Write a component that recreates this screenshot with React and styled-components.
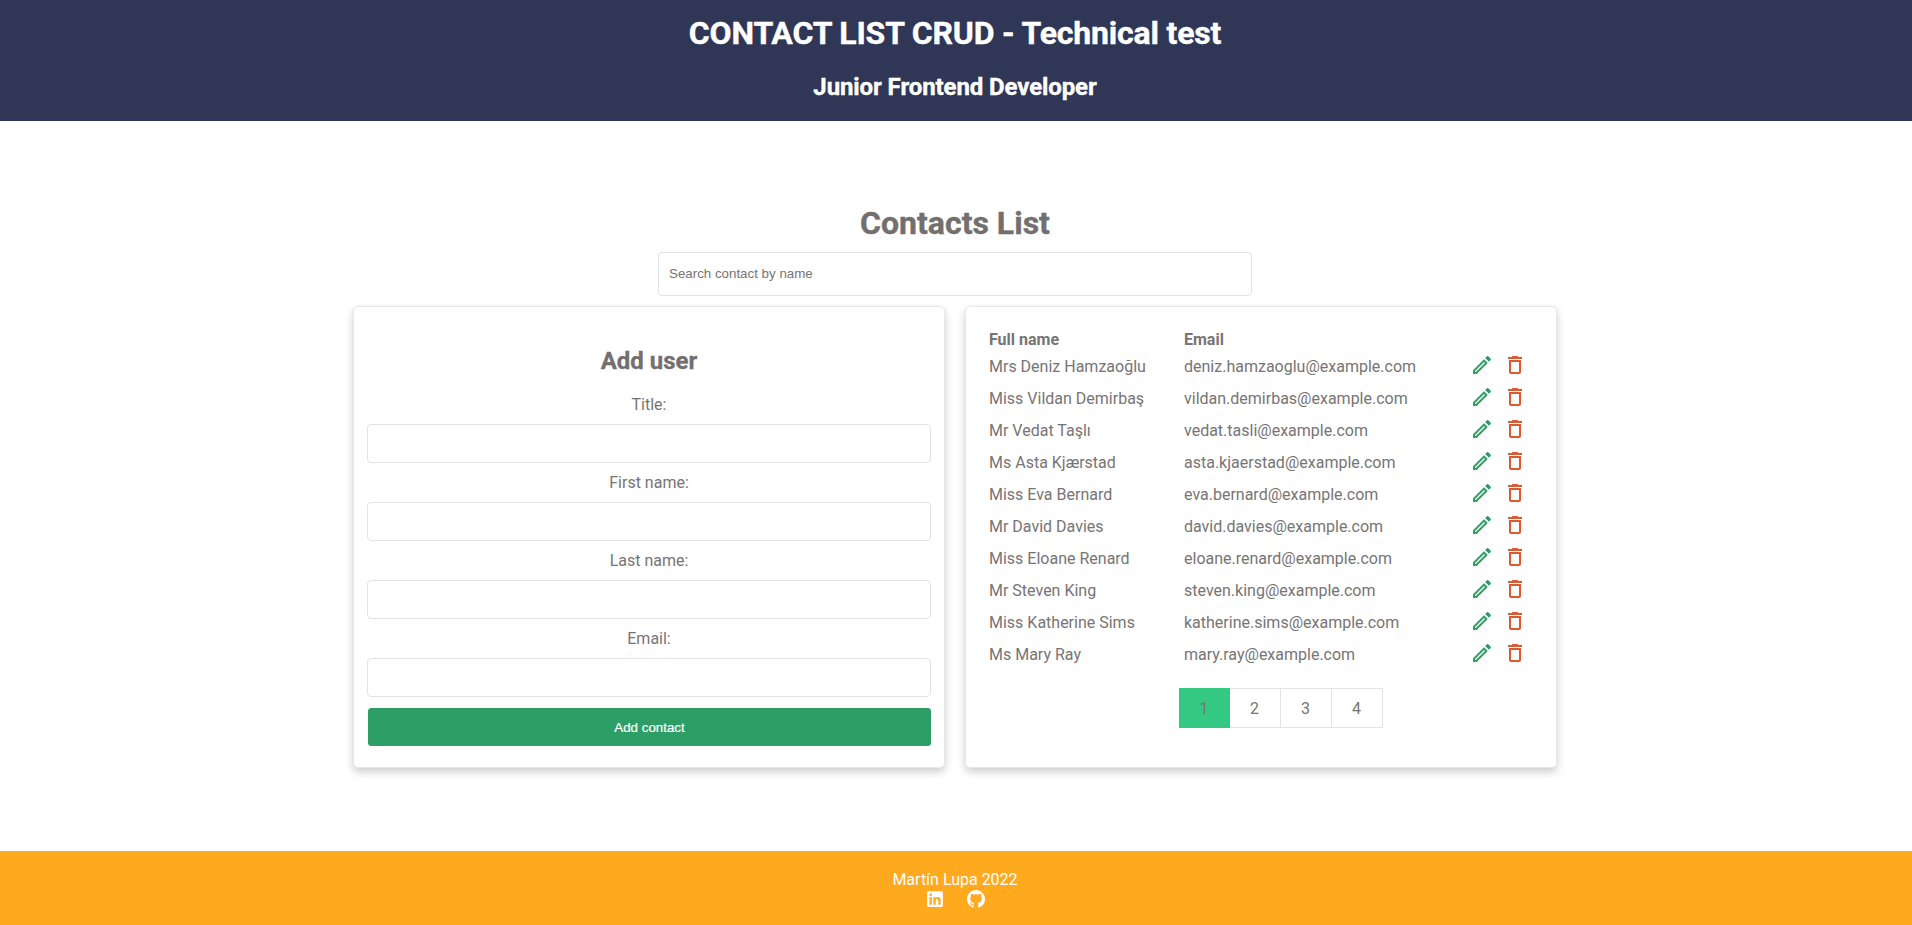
import React from 'react';
import styled, { createGlobalStyle } from 'styled-components';
import { MdOutlineEdit, MdOutlineDelete } from 'react-icons/md';
import { FaLinkedin } from 'react-icons/fa';
import { BsGithub } from 'react-icons/bs';

const GlobalStyle = createGlobalStyle`
  * {
    box-sizing: border-box;
  }
  body {
    margin: 0;
    background: #fff;
    font-family: Roboto, "Liberation Sans", sans-serif;
    color: #777474;
  }
`;

const Page = styled.div`
  min-height: 925px;
  display: flex;
  flex-direction: column;
`;

const Header = styled.header`
  height: 121px;
  background: #303655;
  color: #fff;
  text-align: center;
  padding-right: 2px;
`;

const HeaderTitle = styled.h1`
  margin: 0;
  padding-top: 14px;
  font-size: 32px;
  line-height: 38px;
  letter-spacing: -0.18px;
  -webkit-text-stroke: 0.4px #fff;
`;

const HeaderSubtitle = styled.h2`
  margin: 0;
  padding-top: 21px;
  font-size: 24px;
  line-height: 28px;
  letter-spacing: -0.1px;
  -webkit-text-stroke: 0.4px #fff;
`;

const Main = styled.main`
  flex: 1;
  display: flex;
  flex-direction: column;
  align-items: center;
  padding: 81px 2px 0 0;
`;

const PageTitle = styled.h2`
  margin: 0;
  font-size: 32px;
  line-height: 42px;
  color: #736f6f;
  -webkit-text-stroke: 0.4px #736f6f;
`;

const SearchInput = styled.input`
  width: 594px;
  height: 44px;
  margin-top: 8px;
  padding: 0 10px 2px;
  border: 1px solid #e3e3e3;
  border-radius: 4px;
  font-family: "Liberation Sans", sans-serif;
  font-size: 13.33px;
  color: #777474;
  &::placeholder {
    color: #777474;
    opacity: 1;
  }
`;

const Columns = styled.div`
  display: grid;
  grid-template-columns: 592px 592px;
  gap: 20px;
  margin-top: 10px;
`;

const Card = styled.section`
  height: 462px;
  background: #fff;
  border: 1px solid #e8e8e8;
  border-radius: 5px;
  box-shadow: 0 4px 8px rgba(0, 0, 0, 0.2);
`;

const FormCard = styled(Card)`
  padding: 0 13px;
  text-align: center;
`;

const FormTitle = styled.h3`
  margin: 0;
  padding-top: 40px;
  font-size: 24px;
  line-height: 28px;
  color: #736f6f;
  -webkit-text-stroke: 0.3px #736f6f;
`;

const Field = styled.div`
  padding-top: ${(props) => (props.$first ? '20px' : '10px')};
`;

const FieldLabel = styled.label`
  display: block;
  margin-bottom: 10px;
  font-size: 16px;
  line-height: 19px;
`;

const FieldInput = styled.input`
  display: block;
  width: 100%;
  height: 39px;
  border: 1px solid #e3e3e3;
  border-radius: 4px;
`;

const AddButton = styled.button`
  display: block;
  width: calc(100% - 1px);
  height: 38px;
  margin: 11px 0 0 1px;
  border: 1px solid #2d9f66;
  border-radius: 3px;
  background: #2d9f66;
  color: #fff;
  font-family: "Liberation Sans", sans-serif;
  font-size: 13.33px;
  -webkit-text-stroke: 0.2px #fff;
`;

const ListCard = styled(Card)`
  padding: 22px 24px 0 23px;
`;

const Row = styled.div`
  display: grid;
  grid-template-columns: 195px 286px 1fr;
  align-items: center;
  height: 32px;
  font-size: 16px;
`;

const HeadRow = styled(Row)`
  height: 21px;
  line-height: 19px;
  font-weight: 700;
`;

const Actions = styled.div`
  display: flex;
  align-items: center;
  gap: 9px;
  margin-bottom: 2px;
`;

const EditIcon = styled(MdOutlineEdit)`
  color: #2d9f66;
  font-size: 24px;
`;

const DeleteIcon = styled(MdOutlineDelete)`
  color: #db5a33;
  font-size: 24px;
`;

const Pager = styled.nav`
  display: flex;
  justify-content: center;
  margin-top: 18px;
  padding-left: 40px;
`;

const PageButton = styled.button`
  width: 51px;
  height: 40px;
  border: 1px solid #e3e3e3;
  border-left-width: ${(props) => (props.$first ? '1px' : '0')};
  background: ${(props) => (props.$active ? '#33c982' : '#fff')};
  border-color: ${(props) => (props.$active ? '#33c982' : '#e3e3e3')};
  color: #777474;
  font-family: inherit;
  font-size: 16px;
`;

const Footer = styled.footer`
  height: 74px;
  background: #ffa91f;
  color: #fff;
  text-align: center;
  font-size: 16px;
  padding: 19px 2px 0 0;
  line-height: 19px;
`;

const SocialLinks = styled.div`
  display: flex;
  justify-content: center;
  align-items: center;
  gap: 23px;
  margin-top: 1px;
  font-size: 18px;
`;

const contacts = [
  ['Mrs Deniz Hamzaoğlu', 'deniz.hamzaoglu@example.com'],
  ['Miss Vildan Demirbaş', 'vildan.demirbas@example.com'],
  ['Mr Vedat Taşlı', 'vedat.tasli@example.com'],
  ['Ms Asta Kjærstad', 'asta.kjaerstad@example.com'],
  ['Miss Eva Bernard', 'eva.bernard@example.com'],
  ['Mr David Davies', 'david.davies@example.com'],
  ['Miss Eloane Renard', 'eloane.renard@example.com'],
  ['Mr Steven King', 'steven.king@example.com'],
  ['Miss Katherine Sims', 'katherine.sims@example.com'],
  ['Ms Mary Ray', 'mary.ray@example.com'],
];

const fields = ['Title:', 'First name:', 'Last name:', 'Email:'];

const App = () => (
  <Page>
    <GlobalStyle />
    <Header>
      <HeaderTitle>CONTACT LIST CRUD - Technical test</HeaderTitle>
      <HeaderSubtitle>Junior Frontend Developer</HeaderSubtitle>
    </Header>
    <Main>
      <PageTitle>Contacts List</PageTitle>
      <SearchInput placeholder="Search contact by name" />
      <Columns>
        <FormCard>
          <FormTitle>Add user</FormTitle>
          {fields.map((field, index) => (
            <Field key={field} $first={index === 0}>
              <FieldLabel>{field}</FieldLabel>
              <FieldInput />
            </Field>
          ))}
          <AddButton>Add contact</AddButton>
        </FormCard>
        <ListCard>
          <HeadRow>
            <span>Full name</span>
            <span>Email</span>
          </HeadRow>
          {contacts.map(([name, email]) => (
            <Row key={email}>
              <span>{name}</span>
              <span>{email}</span>
              <Actions>
                <EditIcon />
                <DeleteIcon />
              </Actions>
            </Row>
          ))}
          <Pager>
            {[1, 2, 3, 4].map((page) => (
              <PageButton key={page} $first={page === 1} $active={page === 1}>
                {page}
              </PageButton>
            ))}
          </Pager>
        </ListCard>
      </Columns>
    </Main>
    <Footer>
      Martín Lupa 2022
      <SocialLinks>
        <FaLinkedin />
        <BsGithub />
      </SocialLinks>
    </Footer>
  </Page>
);

export default App;
